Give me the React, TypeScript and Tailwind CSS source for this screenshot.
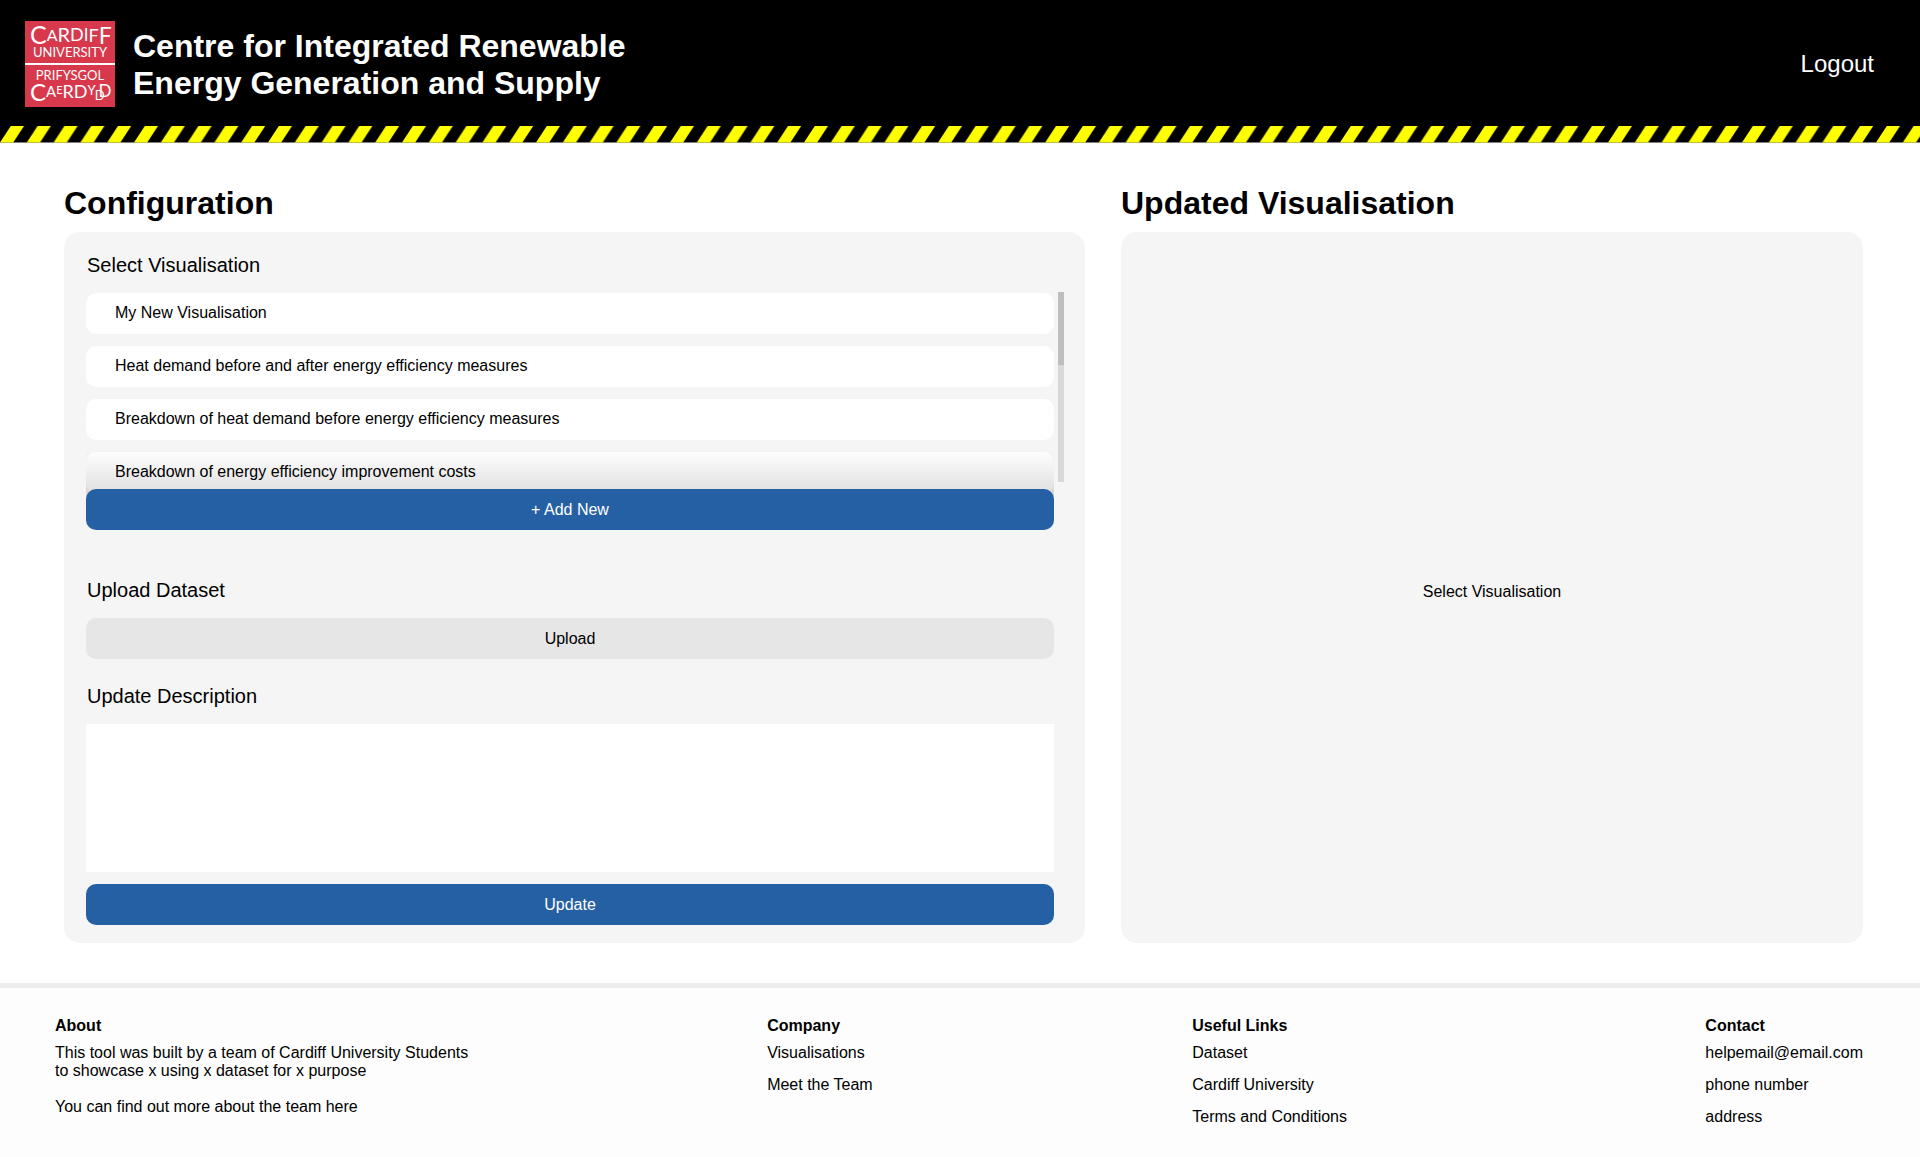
import React from "react";

const visualisations = [
  "My New Visualisation",
  "Heat demand before and after energy efficiency measures",
  "Breakdown of heat demand before energy efficiency measures",
  "Breakdown of energy efficiency improvement costs",
];

function Logo() {
  return (
    <svg
      viewBox="0 0 90 86"
      className="h-[86px] w-[90px] shrink-0 overflow-visible"
      role="img"
      aria-label="Cardiff University, Prifysgol Caerdydd"
      fill="#fff"
      fontFamily="Lato, 'Liberation Sans', sans-serif"
    >
      <rect width="90" height="86" fill="#d8384b" />
      <text x="5" y="23">
        <tspan fontSize="25">C</tspan>
        <tspan dy="-3" fontSize="16">A</tspan>
        <tspan dy="1" fontSize="20">R</tspan>
        <tspan dy="-1" fontSize="18">D</tspan>
        <tspan fontSize="17">I</tspan>
        <tspan dy="1" fontSize="18">F</tspan>
        <tspan dy="2" fontSize="23">F</tspan>
      </text>
      <text x="45" y="36" fontSize="13" textAnchor="middle">UNIVERSITY</text>
      <rect y="42" width="90" height="2" />
      <text x="45" y="59" fontSize="13" textAnchor="middle">PRIFYSGOL</text>
      <text x="5" y="80">
        <tspan fontSize="24">C</tspan>
        <tspan dy="-4" fontSize="15">A</tspan>
        <tspan dy="-3" fontSize="11">E</tspan>
        <tspan dy="4" fontSize="18">R</tspan>
        <tspan fontSize="18">D</tspan>
        <tspan dy="-3" fontSize="13">Y</tspan>
        <tspan dx="-1" dy="5" fontSize="13">D</tspan>
        <tspan dx="-6" dy="-3" fontSize="17">D</tspan>
      </text>
    </svg>
  );
}

function HazardStripes() {
  return (
    <svg className="block h-[17px] w-full" aria-hidden="true">
      <defs>
        <pattern id="hazard" width="26.8" height="17" patternUnits="userSpaceOnUse">
          <rect width="27" height="16.5" fill="#000" />
          <path d="M0 16.5 L10.8 0 H24 L13.2 16.5 Z" fill="#ff0" />
        </pattern>
      </defs>
      <rect width="100%" height="17" fill="url(#hazard)" />
    </svg>
  );
}

function FooterLinks({ title, items }: { title: string; items: string[] }) {
  return (
    <div>
      <h3 className="font-bold">{title}</h3>
      <ul className="mt-[9px] flex flex-col gap-[14px]">
        {items.map((item) => (
          <li key={item}>
            <a href="#">{item}</a>
          </li>
        ))}
      </ul>
    </div>
  );
}

export default function App() {
  return (
    <div className="flex min-h-screen flex-col bg-white font-['Liberation_Sans',Arial,sans-serif] text-[16px] leading-[18px] text-black">
      <header>
        <div className="flex items-center justify-between bg-black pt-[21px] pr-[46px] pb-[19px] pl-[25px] text-white">
          <div className="flex items-center gap-[18px]">
            <Logo />
            <h1 className="pt-[2px] text-[32px] leading-[37px] font-bold">
              Centre for Integrated Renewable
              <br />
              Energy Generation and Supply
            </h1>
          </div>
          <a href="#" className="text-[24px] leading-[28px]">
            Logout
          </a>
        </div>
        <HazardStripes />
      </header>

      <main className="grid grid-cols-[1021fr_742fr] gap-9 pt-[42px] pr-[57px] pb-10 pl-16">
        <section className="flex flex-col">
          <h2 className="mb-[11px] text-[32px] leading-[36px] font-bold">Configuration</h2>
          <div className="flex flex-col rounded-2xl bg-[#f5f5f5] pt-[21px] pr-[21px] pb-[18px] pl-[22px]">
            <h3 className="mb-4 pl-px text-[20px] leading-[24px]">Select Visualisation</h3>
            <div className="flex gap-1">
              <div className="relative h-[205px] flex-1 overflow-hidden">
                <ul className="flex flex-col gap-3">
                  {visualisations.map((name) => (
                    <li key={name}>
                      <button
                        type="button"
                        className="block h-[41px] w-full rounded-[10px] bg-white px-[29px] pb-px text-left"
                      >
                        {name}
                      </button>
                    </li>
                  ))}
                </ul>
                <div className="pointer-events-none absolute inset-x-0 bottom-0 h-12 bg-linear-to-b from-black/0 to-black/14" />
              </div>
              <div className="-mt-px h-[190px] w-[6px] bg-[#d8d8d8]">
                <div className="h-[73px] bg-[#bfbdbd]" />
              </div>
            </div>
            <div className="mr-[10px] flex flex-col">
              <button type="button" className="relative -mt-[9px] h-[41px] rounded-[10px] bg-[#2660a4] text-white">
                + Add New
              </button>
              <h3 className="mt-12 mb-4 pl-px text-[20px] leading-[24px]">Upload Dataset</h3>
              <button type="button" className="h-[41px] rounded-[10px] bg-[#e6e6e6]">
                Upload
              </button>
              <label htmlFor="description" className="mt-[25px] mb-4 pl-px text-[20px] leading-[24px]">
                Update Description
              </label>
              <textarea id="description" className="block h-[148px] resize-none bg-white p-3 outline-none" />
              <button type="button" className="mt-3 h-[41px] rounded-[10px] bg-[#2660a4] text-white">
                Update
              </button>
            </div>
          </div>
        </section>

        <section className="flex flex-col">
          <h2 className="mb-[11px] text-[32px] leading-[36px] font-bold">Updated Visualisation</h2>
          <div className="flex flex-1 items-center justify-center rounded-2xl bg-[#f5f5f5] pt-2">
            <p>Select Visualisation</p>
          </div>
        </section>
      </main>

      <footer className="grid flex-1 grid-cols-[712fr_425fr_513fr_auto] border-t-[5px] border-[#ededed] bg-[#fdfdfd] pt-[29px] pr-[57px] pb-8 pl-[55px]">
        <div>
          <h3 className="font-bold">About</h3>
          <p className="mt-[9px]">
            This tool was built by a team of Cardiff University Students
            <br />
            to showcase x using x dataset for x purpose
          </p>
          <p className="mt-[18px]">
            You can find out more about the team <a href="#">here</a>
          </p>
        </div>
        <FooterLinks title="Company" items={["Visualisations", "Meet the Team"]} />
        <FooterLinks title="Useful Links" items={["Dataset", "Cardiff University", "Terms and Conditions"]} />
        <FooterLinks title="Contact" items={["helpemail@email.com", "phone number", "address"]} />
      </footer>
    </div>
  );
}
